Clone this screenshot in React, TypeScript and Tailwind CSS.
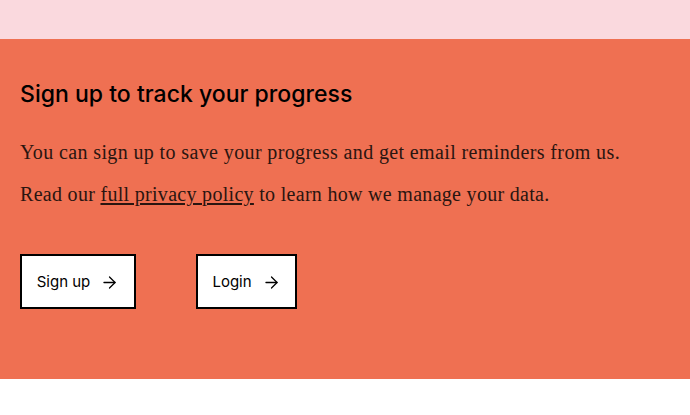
import { ArrowRight } from "lucide-react";

export default function App() {
  return (
    <div className="min-h-[415px] w-full bg-white">
      {/* Top band */}
      <div className="h-[39px] bg-[#fad9de]" />

      {/* Sign up panel */}
      <section className="h-[340px] bg-[#ef7052] px-5 pt-[39px] text-black">
        <h2 className="mb-[28px] font-['Inter',sans-serif] text-[23px] font-medium leading-[32px] tracking-[0.02px]">
          Sign up to track your progress
        </h2>
        <p className="mb-[14px] font-['Liberation_Serif',serif] text-[20px] leading-[28px] tracking-[0.38px] text-[#2a1510]">
          You can sign up to save your progress and get email reminders from us.
        </p>
        <p className="font-['Liberation_Serif',serif] text-[20px] leading-[28px] tracking-[0.3px] text-[#2a1510]">
          Read our{" "}
          <a href="#" className="underline underline-offset-2">
            full privacy policy
          </a>{" "}
          to learn how we manage your data.
        </p>

        <div className="mt-[46px] flex gap-[60px]">
          <button className="flex h-[55px] w-[116px] items-center justify-center gap-[10px] border-2 border-black bg-white pt-[2px] font-['Inter',sans-serif] text-[15px] text-black">
            Sign up
            <ArrowRight size={19} strokeWidth={1.6} />
          </button>
          <button className="flex h-[55px] w-[101px] items-center justify-center gap-[10px] border-2 border-black bg-white pt-[2px] font-['Inter',sans-serif] text-[15px] text-black">
            Login
            <ArrowRight size={19} strokeWidth={1.6} />
          </button>
        </div>
      </section>
    </div>
  );
}
